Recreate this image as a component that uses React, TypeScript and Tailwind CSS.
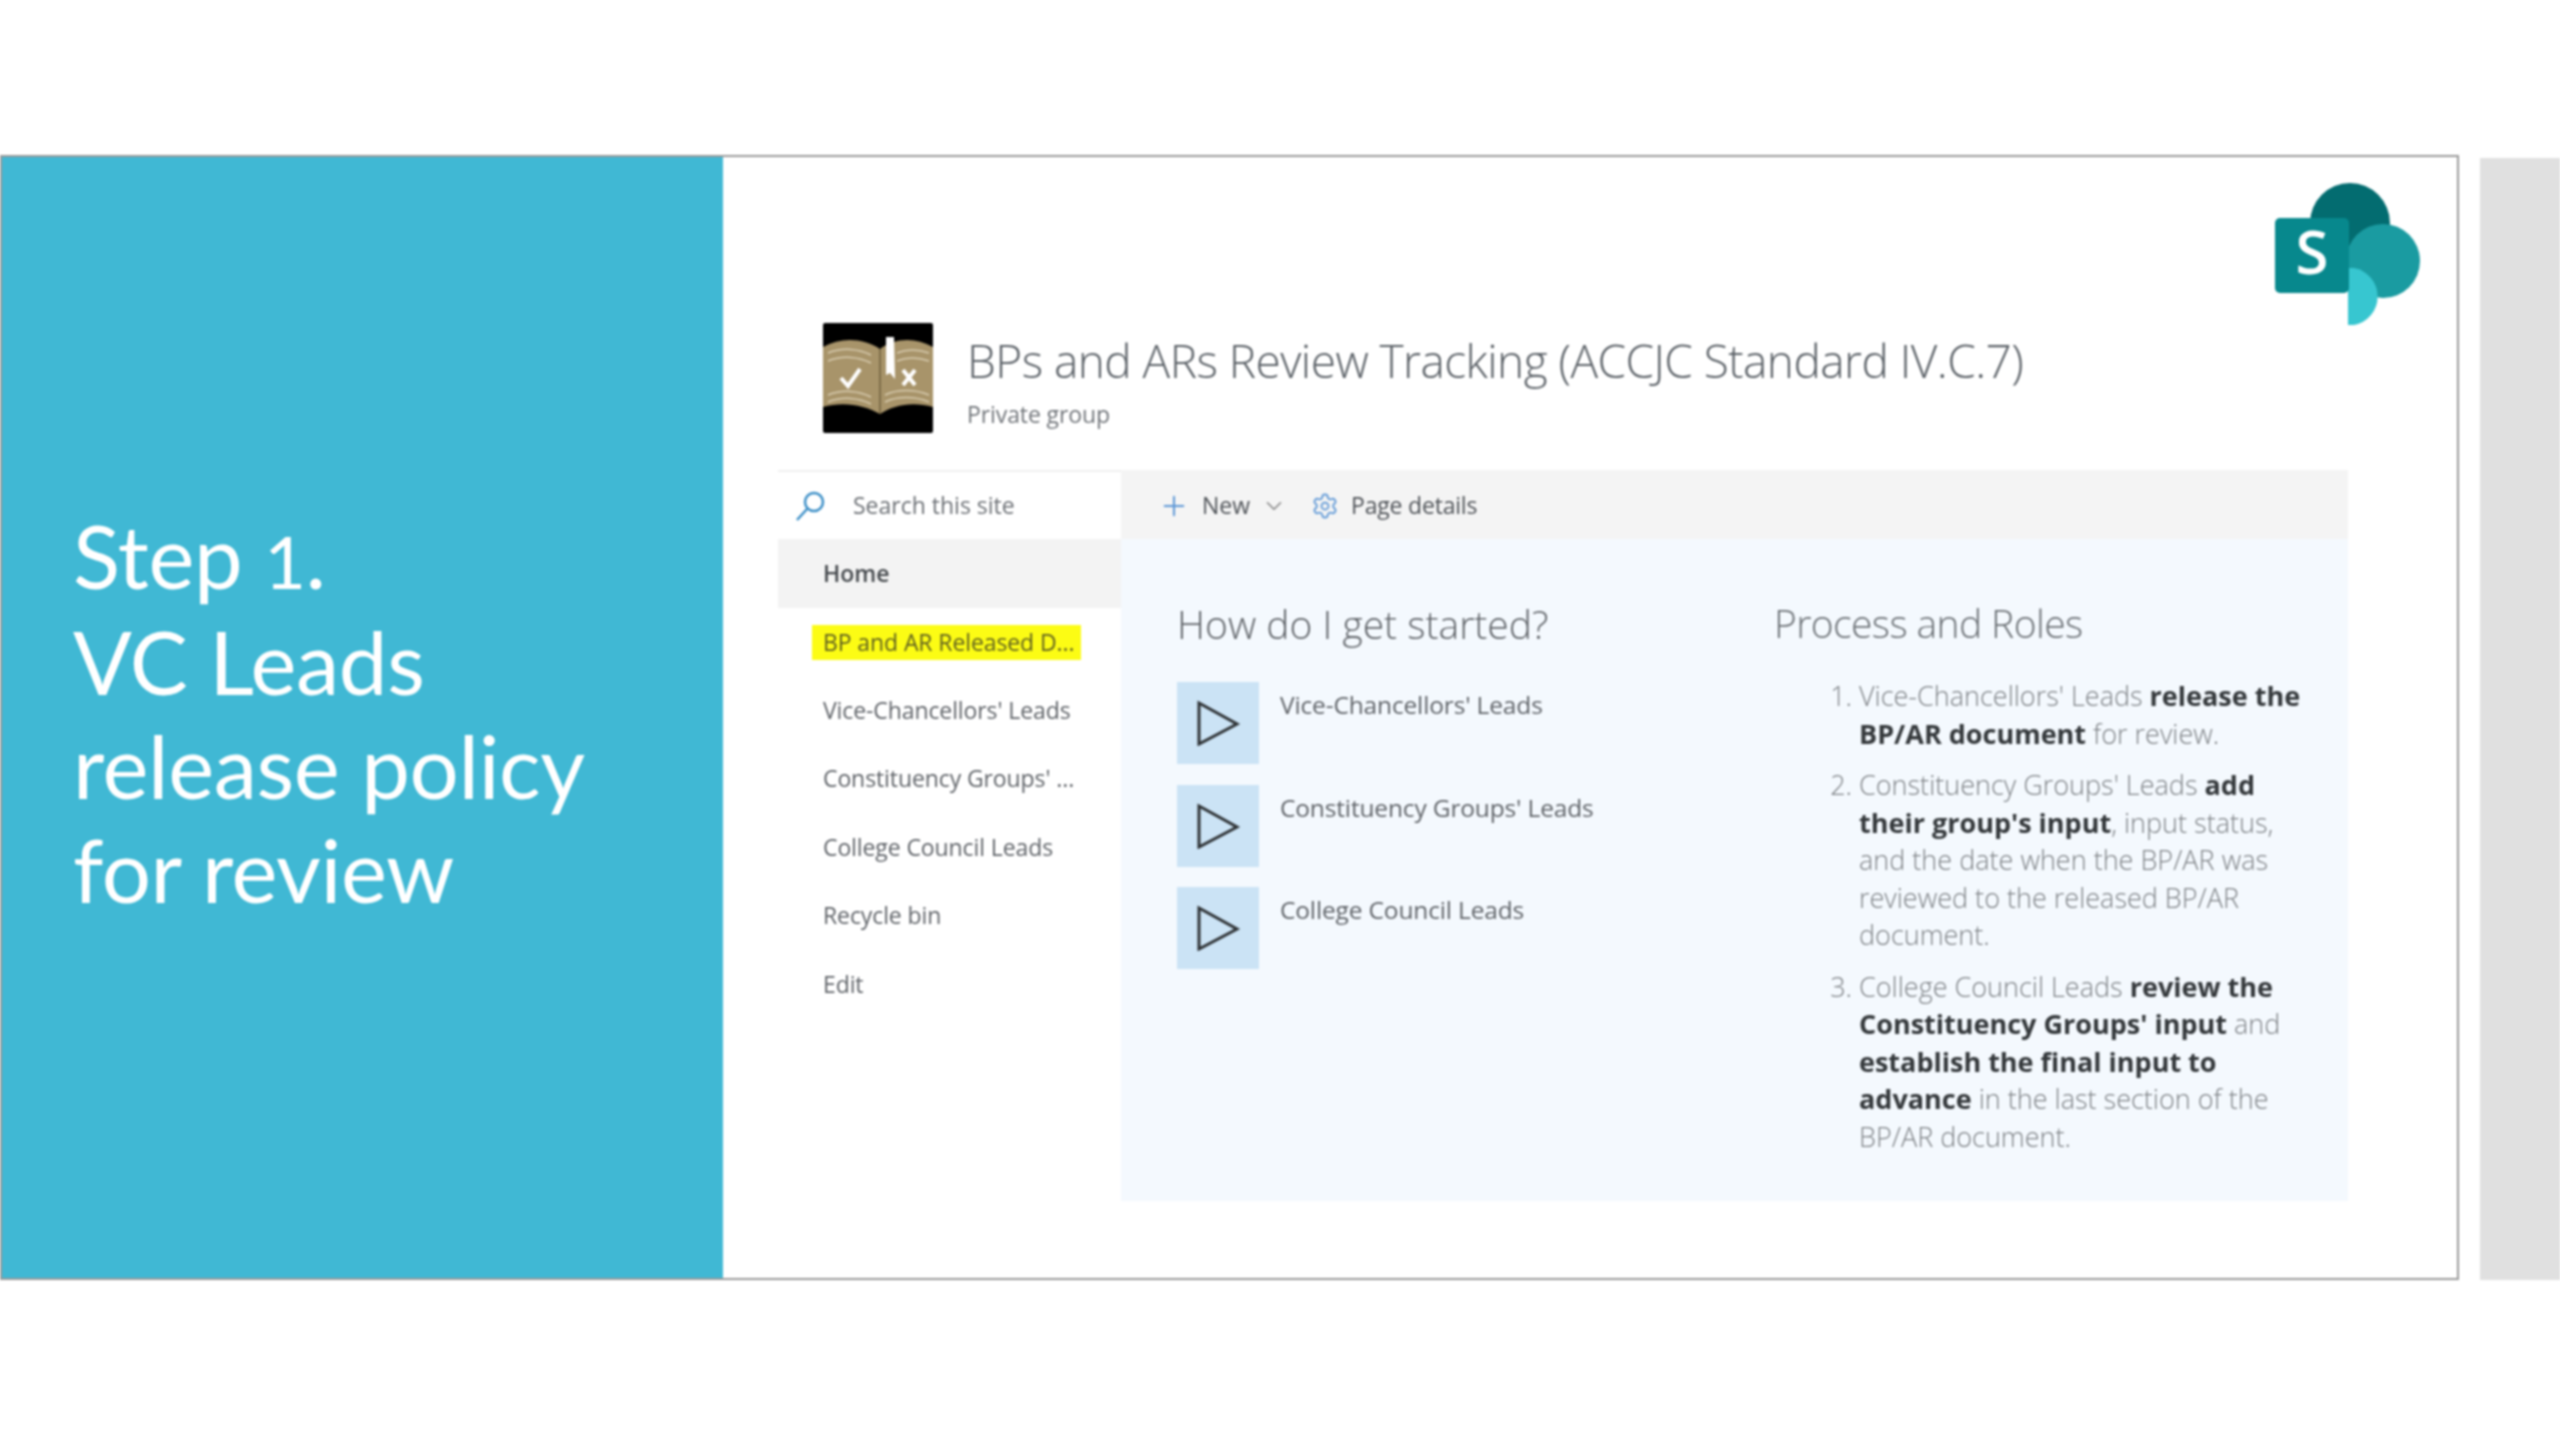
import React from 'react';
import { Plus, ChevronDown, Settings } from 'lucide-react';

const navItems = ['Vice-Chancellors\' Leads', 'Constituency Groups\' ...', 'College Council Leads', 'Recycle bin', 'Edit'];
const startLinks = ['Vice-Chancellors\' Leads', 'Constituency Groups\' Leads', 'College Council Leads'];

function BookLogo() {
  return (
    <svg width="110" height="110" viewBox="0 0 110 110" className="shrink-0 rounded-[2px]">
      <rect width="110" height="110" fill="#000" />
      <path d="M0 24 C18 14 40 15 57 26 C72 15 92 14 110 24 V84 C90 78 70 82 57 91 C42 82 20 78 0 84 Z" fill="#a8946a" />
      <g fill="none" stroke="#d8ccb0" strokeWidth="1.5">
        <path d="M5 30 C20 24 36 26 48 32" />
        <path d="M5 38 C20 32 36 34 48 40" />
        <path d="M5 72 C20 66 36 68 48 74" />
        <path d="M5 79 C20 73 36 75 48 81" />
        <path d="M74 30 C84 26 94 26 106 30" />
        <path d="M74 38 C84 34 94 34 106 38" />
        <path d="M62 72 C74 66 92 66 106 72" />
        <path d="M62 79 C74 73 92 73 106 79" />
      </g>
      <path d="M57 26 V91" stroke="#6f5f3e" strokeWidth="1.5" />
      <path d="M63 14 H71 L72 56 L67 50 L63 52 Z" fill="#fff" />
      <path d="M18 55 L25 63 L37 46" fill="none" stroke="#fff" strokeWidth="4" />
      <path d="M80 47 L92 62 M92 47 L80 62" fill="none" stroke="#fff" strokeWidth="4" />
    </svg>
  );
}

function SharePointLogo() {
  return (
    <svg width="150" height="146" viewBox="0 0 150 146">
      <circle cx="75" cy="42" r="40" fill="#036c70" />
      <circle cx="108" cy="80" r="37" fill="#1a9ba1" />
      <path d="M73 87 H79 A29 29 0 0 1 79 144 H73 Z" fill="#37c6d0" />
      <rect x="0" y="37" width="74" height="75" rx="5" fill="#07888d" />
      <text x="37" y="93" textAnchor="middle" fill="#fff" fontSize="60" fontWeight="600" fontFamily="'Open Sans', sans-serif">S</text>
    </svg>
  );
}

function SearchGlyph() {
  return (
    <svg width="32" height="32" viewBox="0 0 32 32" fill="none" stroke="#3c8fc7" strokeWidth="2.5">
      <circle cx="19" cy="12" r="9" />
      <path d="M12.5 18.5 L2 30" />
    </svg>
  );
}

function PlayBox() {
  return (
    <div className="w-[82px] h-[82px] shrink-0 bg-[#cbe3f5] flex items-center justify-center">
      <svg width="46" height="46" viewBox="0 0 46 46">
        <path d="M4 3 L42 24 L4 44 Z" fill="none" stroke="#2f3336" strokeWidth="3" />
      </svg>
    </div>
  );
}

export default function App() {
  return (
    <div className="w-[2560px] h-[1440px] bg-white overflow-hidden pt-[155px] flex items-start font-['Open_Sans',sans-serif] blur-[0.8px]">
      {/* Slide */}
      <div className="w-[2459px] h-[1125px] shrink-0 border-2 border-[#9a9a9a] flex relative">
        <div className="w-[721px] shrink-0 bg-[#40b8d4] pl-[71px] pt-[351px] text-white text-[87px] tracking-[-0.4px] leading-[104px] font-['Lato',sans-serif]">
          <div className="h-[102px] leading-[95px]">Step <span className="text-[72px]">1</span>.</div>
          <div>VC Leads</div>
          <div>release policy</div>
          <div>for review</div>
        </div>

        <div className="absolute right-[32px] top-[24px]">
          <SharePointLogo />
        </div>

        <div className="flex-1 pl-[55px] pt-[166px]">
          {/* Site header */}
          <div className="flex items-start gap-[34px] h-[147px] pl-[45px]">
            <BookLogo />
            <div>
              <h1 className="text-[46px] tracking-[-0.55px] leading-[64px] mt-[5px] font-light text-[#5b6167] whitespace-nowrap">BPs and ARs Review Tracking (ACCJC Standard IV.C.7)</h1>
              <p className="text-[23px] leading-[30px] mt-[7px] tracking-[-0.1px] text-[#71757a]">Private group</p>
            </div>
          </div>

          <div className="w-[1570px]">
            {/* Command bar */}
            <div className="flex h-[69px] text-[23px] text-[#55595e]">
              <div className="w-[343px] flex items-center pl-[17px] gap-[26px] border-t-2 border-[#f0f0f0] text-[#6c7075]">
                <SearchGlyph />
                <span>Search this site</span>
              </div>
              <div className="flex-1 bg-[#f4f4f4] flex items-center pl-[37px] pt-[2px] text-[#4e5257]">
                <Plus size={32} strokeWidth={1.5} className="text-[#5d97d6]" />
                <span className="ml-[12px]">New</span>
                <ChevronDown size={26} strokeWidth={1.5} className="ml-[11px] text-[#888]" />
                <Settings size={28} strokeWidth={1.5} className="ml-[24px] text-[#5d97d6]" />
                <span className="ml-[12px] tracking-[-0.2px]">Page details</span>
              </div>
            </div>

            <div className="flex h-[662px]">
              {/* Left nav */}
              <nav className="w-[343px] text-[23px] text-[#5f6368]">
                <div className="h-[69px] bg-[#f3f3f3] flex items-center pl-[45px] font-semibold text-[#45494d]">Home</div>
                <div className="h-[68px] flex items-center pl-[34px]">
                  <span className="w-[269px] h-[35px] bg-[#fcfc14] pl-[11px] leading-[34px] tracking-[-0.1px] text-[#5f6020] whitespace-nowrap">BP and AR Released D...</span>
                </div>
                {navItems.map(item => (
                  <div key={item} className="h-[68.4px] flex items-center pl-[45px] tracking-[-0.1px] whitespace-nowrap">{item}</div>
                ))}
              </nav>

              {/* Page content */}
              <main className="flex-1 bg-[#f4f9fe] flex pl-[56px]">
                <section className="w-[597px] pt-[57px]">
                  <h2 className="text-[39px] leading-[56px] font-light text-[#5f6368]">How do I get started?</h2>
                  <div className="mt-[30px] flex flex-col gap-[20.5px]">
                    {startLinks.map(link => (
                      <div key={link} className="flex gap-[21px]">
                        <PlayBox />
                        <span className="text-[24.5px] tracking-[-0.15px] leading-[34px] mt-[6px] text-[#5f6368] whitespace-nowrap">{link}</span>
                      </div>
                    ))}
                  </div>
                </section>

                <section className="flex-1 pt-[56px]">
                  <h2 className="text-[39px] tracking-[-0.6px] leading-[56px] font-light text-[#6b7075]">Process and Roles</h2>
                  <ol className="list-decimal pl-[85px] mt-[26px] text-[27px] leading-[37.5px] font-light text-[#7d8185] w-[550px] space-y-[14px]">
                    <li>Vice-Chancellors' Leads <b className="font-bold text-[#34383b]">release the BP/AR document</b> for review.</li>
                    <li>Constituency Groups' Leads <b className="font-bold text-[#34383b]">add their group's input</b>, input status, and the date when the BP/AR was reviewed to the released BP/AR document.</li>
                    <li>College Council Leads <b className="font-bold text-[#34383b]">review the Constituency Groups' input</b> and <b className="font-bold text-[#34383b]">establish the final input to advance</b> in the last section of the BP/AR document.</li>
                  </ol>
                </section>
              </main>
            </div>
          </div>
        </div>
      </div>

      {/* Next slide peeking in */}
      <div className="ml-[21px] mt-[3px] w-[80px] h-[1122px] bg-[#e0e0e0] shrink-0" />
    </div>
  );
}
